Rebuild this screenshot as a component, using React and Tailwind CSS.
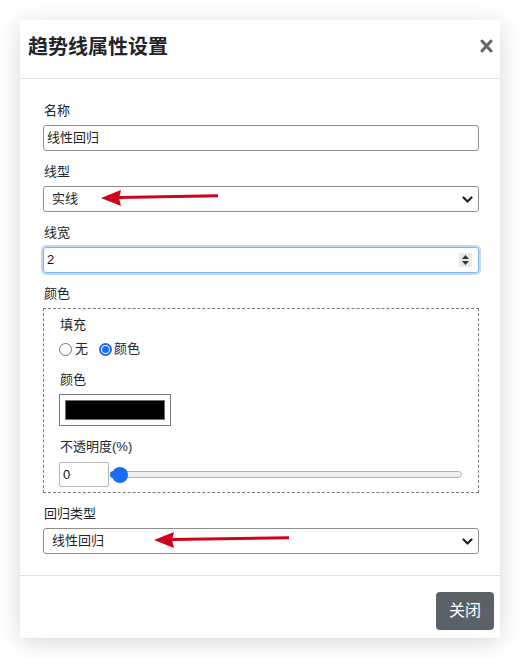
import React from "react";

const font = { fontFamily: '"Liberation Sans", "Noto Sans CJK SC", sans-serif' };

function Label({ children, className = "" }) {
  return (
    <div className={`h-[20px] leading-[20px] text-[13px] text-[#212529] pl-[1px] mb-[4px] ${className}`}>
      {children}
    </div>
  );
}

function Chevron() {
  return (
    <svg className="absolute right-[5px] top-[9px] w-[11px] h-[8px]" viewBox="0 0 11 8">
      <path d="M1.5 1.5 L5.5 5.5 L9.5 1.5" fill="none" stroke="#222" strokeWidth="2.2" strokeLinecap="round" strokeLinejoin="round" />
    </svg>
  );
}

function RedArrow({ left, width }) {
  // annotation arrow drawn over the select
  const headEnd = 20;
  return (
    <svg
      className="absolute top-0 pointer-events-none"
      style={{ left, width, height: 26 }}
      viewBox={`0 0 ${width} 26`}
    >
      <line x1={headEnd - 2} y1="10.6" x2={width - 1} y2="8.8" stroke="#d0021b" strokeWidth="3" />
      <polygon points={`0,11 ${headEnd},3 ${headEnd - 2},11 ${headEnd},19`} fill="#d0021b" />
    </svg>
  );
}

function Select({ value, arrow }) {
  return (
    <div className="relative h-[26px] border border-[#8f8f8f] rounded-[3px] bg-white">
      <div className="pl-[8px] leading-[24px] text-[13px] text-[#212529]">{value}</div>
      <Chevron />
      {arrow}
    </div>
  );
}

export default function App() {
  return (
    <div className="min-h-screen bg-white p-5" style={font}>
      <div className="w-[480px] bg-white shadow-[0_4px_22px_rgba(0,0,0,0.16)]">
        {/* header */}
        <div className="h-[59px] border-b border-[#dee2e6] flex items-start justify-between pt-[14px] pl-[8px] pr-[7px]">
          <h2 className="text-[20px] leading-[26px] font-bold text-[#212529]">趋势线属性设置</h2>
          <svg className="mt-[5px] w-[13px] h-[14px]" viewBox="0 0 13 14">
            <path d="M2 2 L11 12 M11 2 L2 12" stroke="#666" strokeWidth="3" strokeLinecap="round" />
          </svg>
        </div>

        {/* body */}
        <div className="pt-[22px] pb-[21px] pl-[23px] pr-[21px]">
          <Label>名称</Label>
          <div className="h-[26px] border border-[#8f8f8f] rounded-[3px] pl-[3px] leading-[24px] text-[13px] text-[#212529] mb-[11px]">
            线性回归
          </div>

          <Label>线型</Label>
          <div className="mb-[11px]">
            <Select value="实线" arrow={<RedArrow left={57} width={118} />} />
          </div>

          <Label>线宽</Label>
          <div className="relative h-[26px] border border-[#7fb2f0] rounded-[3px] shadow-[0_0_0_2px_rgba(120,170,245,0.45)] pl-[3px] leading-[24px] text-[13px] text-[#111] mb-[11px]">
            2
            <div className="absolute right-[6px] top-[5px] w-[13px] h-[14px] bg-[#e8e8e8] flex flex-col items-center justify-center gap-[2px]">
              <svg className="w-[7px] h-[4px]" viewBox="0 0 7 4"><path d="M0 4 L3.5 0 L7 4 Z" fill="#333" /></svg>
              <svg className="w-[7px] h-[4px]" viewBox="0 0 7 4"><path d="M0 0 L3.5 4 L7 0 Z" fill="#333" /></svg>
            </div>
          </div>

          <Label>颜色</Label>
          <div className="border border-dashed border-[#7a7a7a] pt-[6px] pb-[5px] pl-[15px] pr-[16px] mb-[11px]">
            <Label className="pl-0">填充</Label>
            <div className="h-[20px] flex items-center text-[13px] text-[#212529] mb-[11px]">
              <span className="w-[13px] h-[13px] rounded-full border border-[#767676] bg-white" />
              <span className="ml-[3px]">无</span>
              <span className="ml-[11px] w-[13px] h-[13px] rounded-full border-[2px] border-[#1a6cf5] flex items-center justify-center">
                <span className="w-[7px] h-[7px] rounded-full bg-[#1a6cf5]" />
              </span>
              <span className="ml-[2px]">颜色</span>
            </div>

            <Label className="pl-0">颜色</Label>
            <div className="w-[112px] h-[32px] border border-[#767676] p-[5px] mb-[11px]">
              <div className="w-full h-full bg-black border border-[#707070]" />
            </div>

            <Label className="pl-0 mb-[5px]">不透明度(%)</Label>
            <div className="flex items-center">
              <div className="w-[50px] h-[25px] border border-[#b5b5b5] rounded-[2px] pl-[3px] leading-[23px] text-[13px] text-[#111]">0</div>
              <div className="relative flex-1 ml-[1px] h-[16px] flex items-center">
                <div className="w-full h-[7px] rounded-full border border-[#b0b0b0] bg-[#efefef]" />
                <div className="absolute left-0 top-[4.5px] w-[8px] h-[7px] rounded-l-full bg-[#1a6cf5]" />
                <div className="absolute left-[2px] top-0 w-[16px] h-[16px] rounded-full bg-[#1a6cf5]" />
              </div>
            </div>
          </div>

          <Label>回归类型</Label>
          <Select value="线性回归" arrow={<RedArrow left={110} width={136} />} />
        </div>

        {/* footer */}
        <div className="border-t border-[#dee2e6] pt-[16px] pb-[8px] pr-[6px] flex justify-end">
          <button className="w-[58px] h-[38px] rounded-[4px] bg-[#5a6268] text-white text-[16px]">关闭</button>
        </div>
      </div>
    </div>
  );
}
